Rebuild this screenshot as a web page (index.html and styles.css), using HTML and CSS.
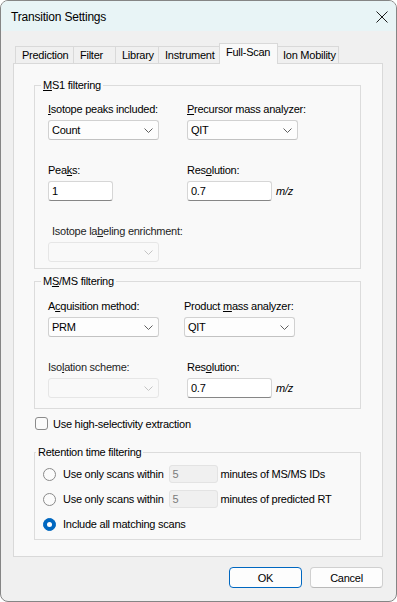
FILE: index.html
```html
<!DOCTYPE html>
<html>
<head>
    <meta charset="UTF-8">
    <title>Transition Settings</title>
    <link rel="stylesheet" href="styles.css">
</head>
<body>
<div class="window">
    <div class="titlebar">
        <span class="title">Transition Settings</span>
        <svg class="close" width="12" height="12" viewBox="0 0 12 12">
            <path d="M0.5 0.5 L11.5 11.5 M11.5 0.5 L0.5 11.5" stroke="#1b1b1b" stroke-width="1" fill="none"/>
        </svg>
    </div>

    <div class="body">
        <div class="tabs">
            <div class="tab">Prediction</div>
            <div class="tab">Filter</div>
            <div class="tab">Library</div>
            <div class="tab">Instrument</div>
            <div class="tab active">Full-Scan</div>
            <div class="tab">Ion Mobility</div>
        </div>

        <div class="panel">
            <!-- MS1 -->
            <fieldset class="group ms1">
                <legend><u>M</u>S1 filtering</legend>
                <div class="fields">
                    <div class="field">
                        <label><u>I</u>sotope peaks included:</label>
                        <div class="combo"><span>Count</span><svg class="chev" width="9" height="5" viewBox="0 0 9 5"><path d="M0.5 0.5 L4.5 4.5 L8.5 0.5" stroke="#5f5f5f" fill="none"/></svg></div>
                    </div>
                    <div class="field">
                        <label><u>P</u>recursor mass analyzer:</label>
                        <div class="combo"><span>QIT</span><svg class="chev" width="9" height="5" viewBox="0 0 9 5"><path d="M0.5 0.5 L4.5 4.5 L8.5 0.5" stroke="#5f5f5f" fill="none"/></svg></div>
                    </div>
                    <div class="field">
                        <label>Pea<u>k</u>s:</label>
                        <div class="textbox w-peaks">1</div>
                    </div>
                    <div class="field">
                        <label>Res<u>o</u>lution:</label>
                        <div class="inline">
                            <div class="textbox w-res">0.7</div>
                            <span class="unit">m/z</span>
                        </div>
                    </div>
                    <div class="field">
                        <label class="dim indent">Isotope la<u>b</u>eling enrichment:</label>
                        <div class="combo off"><span></span><svg class="chev" width="9" height="5" viewBox="0 0 9 5"><path d="M0.5 0.5 L4.5 4.5 L8.5 0.5" stroke="#c4c4c4" fill="none"/></svg></div>
                    </div>
                </div>
            </fieldset>

            <!-- MS/MS -->
            <fieldset class="group msms">
                <legend>M<u>S</u>/MS filtering</legend>
                <div class="fields">
                    <div class="field">
                        <label>A<u>c</u>quisition method:</label>
                        <div class="combo"><span>PRM</span><svg class="chev" width="9" height="5" viewBox="0 0 9 5"><path d="M0.5 0.5 L4.5 4.5 L8.5 0.5" stroke="#5f5f5f" fill="none"/></svg></div>
                    </div>
                    <div class="field">
                        <label>Product <u>m</u>ass analyzer:</label>
                        <div class="combo"><span>QIT</span><svg class="chev" width="9" height="5" viewBox="0 0 9 5"><path d="M0.5 0.5 L4.5 4.5 L8.5 0.5" stroke="#5f5f5f" fill="none"/></svg></div>
                    </div>
                    <div class="field">
                        <label class="dim">Iso<u>l</u>ation scheme:</label>
                        <div class="combo off"><span></span><svg class="chev" width="9" height="5" viewBox="0 0 9 5"><path d="M0.5 0.5 L4.5 4.5 L8.5 0.5" stroke="#c4c4c4" fill="none"/></svg></div>
                    </div>
                    <div class="field shift">
                        <label>Res<u>o</u>lution:</label>
                        <div class="inline">
                            <div class="textbox w-res">0.7</div>
                            <span class="unit">m/z</span>
                        </div>
                    </div>
                </div>
            </fieldset>

            <div class="check">
                <span class="box"></span>
                <span>Use high-selectivity extraction</span>
            </div>

            <!-- retention time -->
            <fieldset class="group rt">
                <legend>Retention time filtering</legend>
                <div class="radios">
                    <div class="radio-row">
                        <span class="radio"></span>
                        <span>Use only scans within</span>
                        <span class="num">5</span>
                        <span>minutes of MS/MS IDs</span>
                    </div>
                    <div class="radio-row">
                        <span class="radio"></span>
                        <span>Use only scans within</span>
                        <span class="num">5</span>
                        <span>minutes of predicted RT</span>
                    </div>
                    <div class="radio-row">
                        <span class="radio on"></span>
                        <span>Include all matching scans</span>
                    </div>
                </div>
            </fieldset>
        </div>

        <div class="actions">
            <button class="btn default">OK</button>
            <button class="btn">Cancel</button>
        </div>
    </div>
</div>
</body>
</html>
```

FILE: styles.css
```css
body{
    margin:0;
    background:#fff;
    font-family:"Liberation Sans", Arial, sans-serif;
    font-size:11px;
    letter-spacing:-0.25px;
    color:#000;
}

.window{
    width:397px; height:602px;
    box-sizing:border-box;
    border:1px solid #858585;
    border-radius:8px;
    background:#f0f0f0;
    overflow:hidden;
}

.titlebar{
    height:30px;
    background:#e8f4f6;
    display:flex; align-items:center; justify-content:space-between;
    padding:0 8px 0 10px;
}
.title{
    font-size:12px; letter-spacing:-0.2px;
    padding-top:1px;
}
.close{ margin-top:1px; }

.body{
    padding:12px 13px 0 12px;
}

/* tab strip */
.tabs{
    display:flex; align-items:flex-end;
    height:20px;
    padding-left:2px;
}
.tab{
    height:17px;
    box-sizing:border-box;
    border:1px solid #d9d9d9; border-bottom:none;
    margin-left:-1px;
    padding:1px 0 0 6px;
    line-height:15px;
    background:#f0f0f0;
    white-space:nowrap;
}
.tab:first-child{ margin-left:0; }
.tab:nth-child(1){ width:59px; }
.tab:nth-child(2){ width:43px; }
.tab:nth-child(3){ width:44px; }
.tab:nth-child(4){ width:62px; }
.tab:nth-child(5){ width:59px; }
.tab:nth-child(6){ width:62px; padding-left:5px; }
.tab.active{
    height:21px;
    margin-bottom:-1px;
    padding-top:1px;
    background:#f9f9f9;
    position:relative; z-index:1;
}

.panel{
    height:494px;
    box-sizing:border-box;
    border:1px solid #d9d9d9;
    background:#f9f9f9;
    padding:14px 21px 0 20px;
}

/* group boxes */
.group{
    margin:0;
    min-width:0;
    border:1px solid #dcdcdc;
    padding:10px 13px 6px 13px;
}
.group legend{
    padding:0 2px;
    margin-left:-7px;
    line-height:14px;
}
.msms{ margin-top:5px; padding-top:11px; padding-bottom:10px; }

.fields{
    display:grid;
    grid-template-columns:139px 1fr;
    row-gap:23px;
}
.msms .fields{ grid-template-columns:136px 1fr; row-gap:23px; }
.field{
    display:flex; flex-direction:column; align-items:flex-start;
    gap:3px;
}
.field label{ line-height:15px; white-space:nowrap; }
.field.shift{ margin-left:3px; }
.dim{ color:#1e1e1e; }
.indent{ margin-left:4px; }

.combo{
    width:111px; height:20px;
    box-sizing:border-box;
    border:1px solid #d1d1d1; border-bottom-color:#c2c2c2;
    border-radius:3px;
    background:#fdfdfd;
    display:flex; align-items:center; justify-content:space-between;
    padding:0 5px 0 3px;
}
.combo.off{
    background:#f9f9f9;
    border-color:#e6e6e6;
}

.textbox{
    height:20px;
    box-sizing:border-box;
    border:1px solid #d6d6d6; border-bottom-color:#868686;
    border-radius:3px;
    background:#fff;
    padding:0 3px;
    display:flex; align-items:center;
}
.w-peaks{ width:65px; }
.w-res{ width:85px; }
.inline{ display:flex; align-items:center; }
.unit{ font-style:italic; margin-left:4px; }

/* checkbox */
.check{
    display:flex; align-items:center;
    height:15px;
    margin:7px 0 0 1px;
}
.box{
    width:13px; height:13px;
    box-sizing:border-box;
    border:1px solid #8b8b8b;
    border-radius:3px;
    background:#fbfbfb;
    margin-right:5px;
}

/* retention time */
.rt{
    margin-top:14px;
    padding:5px 8px 5px 8px;
}
.radios{
    display:flex; flex-direction:column;
    gap:5px;
}
.radio-row{
    display:flex; align-items:center;
    height:20px;
}
.radio{
    width:13px; height:13px;
    box-sizing:border-box;
    border:1px solid #8a8a8a;
    border-radius:50%;
    background:#fbfbfb;
    margin-right:7px;
}
.radio.on{
    background:#0067c0; border-color:#0067c0;
    display:flex; align-items:center; justify-content:center;
}
.radio.on::after{
    content:""; width:5px; height:5px;
    border-radius:50%; background:#fff;
}
.num{
    width:49px; height:18px;
    box-sizing:border-box;
    border:1px solid #e3e3e3;
    border-radius:3px;
    background:#f0f0f0;
    color:#7a7a7a;
    padding:0 3px;
    margin:0 3px 0 5px;
    display:flex; align-items:center;
}

/* buttons */
.actions{
    display:flex; justify-content:flex-end;
    gap:8px;
    margin-top:10px;
}
.btn{
    width:73px; height:21px;
    box-sizing:border-box;
    font:inherit; letter-spacing:inherit; color:#000;
    background:#fdfdfd;
    border:1px solid #d0d0d0; border-bottom-color:#b9b9b9;
    border-radius:4px;
    padding:0;
}
.btn.default{
    border:1px solid #0067c0;
}
```
